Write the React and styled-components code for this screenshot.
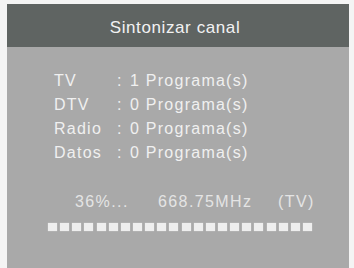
import React from "react";
import styled, { createGlobalStyle } from "styled-components";

const GlobalStyle = createGlobalStyle`
  html, body {
    margin: 0;
    padding: 0;
    background: #f4f4f4;
  }
  body {
    font-family: "Liberation Sans", Arial, sans-serif;
  }
`;

const channels = [
  { label: "TV", count: 1 },
  { label: "DTV", count: 0 },
  { label: "Radio", count: 0 },
  { label: "Datos", count: 0 },
];

const SEGMENTS = 22;

export default function App() {
  return (
    <>
      <GlobalStyle />
      <Screen>
        <Panel>
          <Header>Sintonizar canal</Header>
          <Body>
            <Counts>
              {channels.map((c) => (
                <React.Fragment key={c.label}>
                  <span>{c.label}</span>
                  <span>:</span>
                  <span>{c.count} Programa(s)</span>
                </React.Fragment>
              ))}
            </Counts>
            <Status>
              <span>36%...</span>
              <span>668.75MHz</span>
              <span>(TV)</span>
            </Status>
            <Bar>
              {Array.from({ length: SEGMENTS }).map((_, i) => (
                <Segment key={i} />
              ))}
            </Bar>
          </Body>
        </Panel>
      </Screen>
    </>
  );
}

const Screen = styled.div`
  width: 354px;
  height: 268px;
  padding: 4px 5px 0 7px;
  box-sizing: border-box;
  overflow: hidden;
`;

const Panel = styled.div`
  height: 264px;
  background: #a9a9a9;
  display: flex;
  flex-direction: column;
`;

const Header = styled.div`
  height: 43px;
  box-sizing: border-box;
  padding: 5px 6px 0 0;
  background: #5f6462;
  color: #f2f2f2;
  font-size: 17px;
  letter-spacing: 0.6px;
  display: flex;
  align-items: center;
  justify-content: center;
`;

const Body = styled.div`
  padding: 24px 0 0 47px;
  color: #f0f0f0;
  font-size: 16px;
  letter-spacing: 1.25px;
`;

const Counts = styled.div`
  display: grid;
  grid-template-columns: 63px 13px auto;
  row-gap: 5px;
  line-height: 19px;
`;

const Status = styled.div`
  display: grid;
  grid-template-columns: 83px 120px auto;
  margin: 30px 0 0 21px;
  color: #e4e4e4;
  line-height: 19px;
  letter-spacing: 1.4px;
`;

const Bar = styled.div`
  width: 264px;
  display: flex;
  justify-content: space-between;
  margin: 12px 0 0 -6px;
`;

const Segment = styled.div`
  width: 9px;
  height: 8px;
  background: #eeeeee;
  box-shadow: 0 0 1px #d8d8d8;
`;
